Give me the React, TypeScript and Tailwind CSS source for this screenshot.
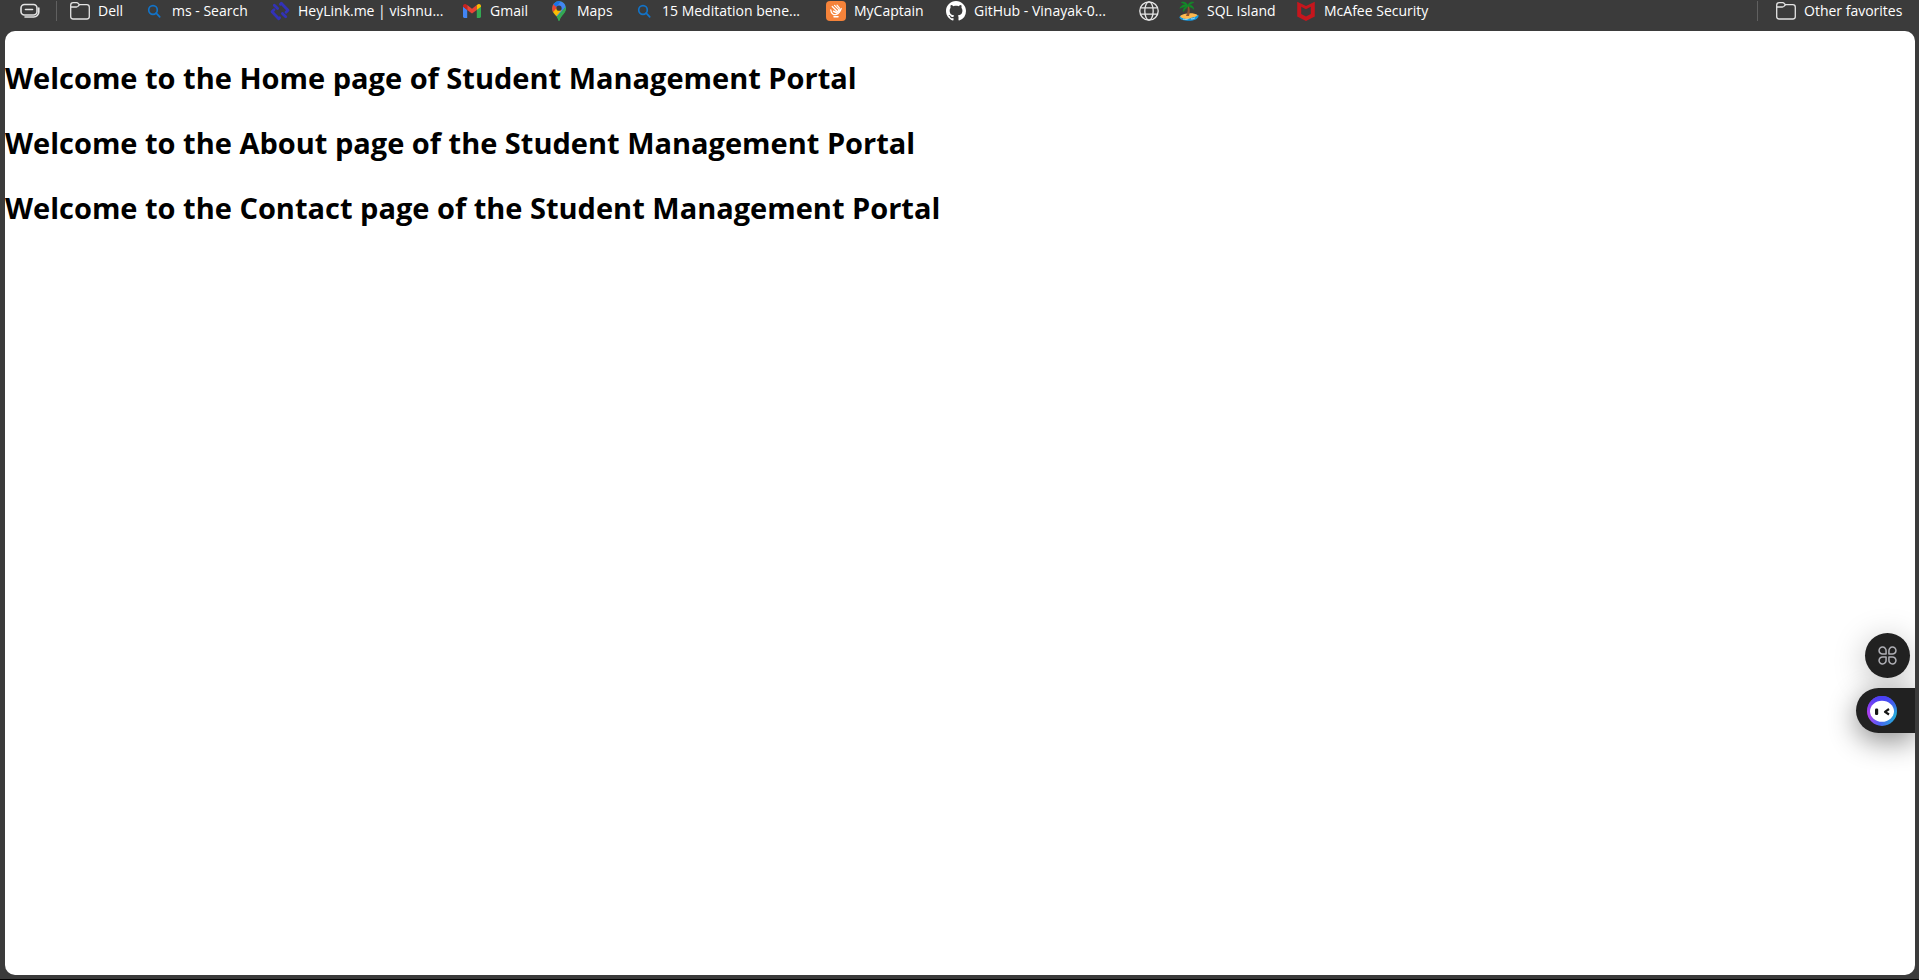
import type { ReactNode } from "react";

function TabActionsIcon() {
  return (
    <svg width="20" height="20" viewBox="0 0 20 20" fill="none" stroke="#e4e4e4" strokeWidth="1.6" strokeLinecap="round" strokeLinejoin="round">
      <rect x="1" y="3.5" width="16" height="10.5" rx="3.5" />
      <path d="M5.5 8.5h7" />
      <path d="M18.8 7v4a5 5 0 0 1-5 5H5" />
    </svg>
  );
}

function FolderIcon() {
  return (
    <svg width="20" height="20" viewBox="0 0 20 20" fill="none" stroke="#e4e4e4" strokeWidth="1.3" strokeLinejoin="round">
      <path d="M.7 4.2A2.5 2.5 0 0 1 3.2 1.7h3.4c.7 0 1.2.2 1.6.7l1.2 1.3h7.4a2.5 2.5 0 0 1 2.5 2.5v9.3a2.5 2.5 0 0 1-2.5 2.5H3.2a2.5 2.5 0 0 1-2.5-2.5z" />
      <path d="M.7 6h5.7c.6 0 1.1-.2 1.5-.6l1.5-1.6" />
    </svg>
  );
}

function SearchIcon() {
  return (
    <svg width="20" height="20" viewBox="0 0 20 20" fill="none" stroke="#1273c8" strokeWidth="1.7" strokeLinecap="round">
      <circle cx="9" cy="9" r="4.3" />
      <path d="M12.2 12.2l3.5 3.6" />
    </svg>
  );
}

function HeyLinkIcon() {
  return (
    <svg width="20" height="20" viewBox="0 0 20 20" fill="none" stroke="#3232b8" strokeWidth="2.8" strokeLinecap="round" strokeLinejoin="round">
      <path d="M4.300 4.300L7.600 7.600" />
      <path d="M4 8.700L2 10.800l6.700 6.900.9-1" />
      <path d="M15.700 15.700l-3.300-3.300" />
      <path d="M16 11.300l2-2.100-6.700-6.900-.9 1" />
    </svg>
  );
}

function GmailIcon() {
  return (
    <svg width="20" height="20" viewBox="0 0 20 20">
      <path fill="#4285f4" d="M1 5.500l4.200 3.200v8.200H2.300A1.300 1.300 0 0 1 1 15.600z" />
      <path fill="#34a853" d="M14.800 8.700L19 5.500v10.100a1.300 1.300 0 0 1-1.300 1.300h-2.900z" />
      <path fill="#ea4335" d="M5.200 4.100L10 7.700l4.800-3.600v4.800L10 12.500 5.200 8.900z" />
      <path fill="#c5221f" d="M1 5.300c0-2.100 2.200-2.900 3.700-1.600l.5.4v4.800L1 5.800z" />
      <path fill="#fbbc04" d="M19 5.300c0-2.100-2.200-2.900-3.700-1.600l-.5.4v4.800L19 5.800z" />
    </svg>
  );
}

function MapsIcon() {
  return (
    <svg width="20" height="20" viewBox="0 0 20 20">
      <defs>
        <clipPath id="map-pin">
          <path d="M10 .3a6.900 6.900 0 0 0-6.900 6.900c0 2.500 1 4 2.800 6.200C7.800 15.700 9 17 9.300 19.300c.2.900 1.200.9 1.400 0 .3-2.300 1.500-3.600 3.400-5.900 1.800-2.200 2.800-3.700 2.800-6.200A6.900 6.900 0 0 0 10 .3z" />
        </clipPath>
      </defs>
      <g clipPath="url(#map-pin)">
        <rect width="20" height="20" fill="#34a853" />
        <path fill="#4285f4" d="M7 0h12v5L9 17 5 8z" />
        <path fill="#34a853" d="M18 4L4.500 19.500H20z" />
        <path fill="#fbbc04" d="M1 13L8 4.500l4.500 4.800L5 18z" />
        <path fill="#ea4335" d="M0 9V2h5l4 3.500L4.200 11z" />
        <path fill="#1a73e8" d="M3.800 3L7 0h5l-4.500 6z" />
      </g>
      <circle cx="10" cy="7.200" r="2.600" fill="#3b3b3b" />
    </svg>
  );
}

function MyCaptainIcon() {
  return (
    <svg width="20" height="20" viewBox="0 0 20 20" fill="none">
      <rect width="20" height="20" rx="4" fill="#f5833a" />
      <g stroke="#fff" strokeLinecap="round" strokeLinejoin="round">
        <path strokeWidth="1.200" d="M8.500 4.300l4.500 4.500M6.200 5.500l5 5M11 4.200l2.500 3" />
        <path strokeWidth="1.300" d="M4.800 9c.3 3.800 3 5.400 5.600 4.400 2.300-.8 3.700-2.500 4.800-5.900" />
        <path strokeWidth="1.500" d="M7.500 10.300l3.100 1.500 2.700-2.700M8 15.700h4" />
      </g>
    </svg>
  );
}

function GitHubIcon() {
  return (
    <svg width="20" height="20" viewBox="0 0 16 16" fill="#fff">
      <path d="M8 0C3.580 0 0 3.580 0 8c0 3.540 2.290 6.530 5.470 7.590.4.070.55-.17.55-.38 0-.19-.01-.82-.01-1.490-2.010.37-2.530-.49-2.690-.94-.09-.23-.48-.94-.82-1.130-.28-.15-.68-.52-.01-.53.63-.01 1.080.58 1.230.82.720 1.210 1.870.87 2.330.66.070-.52.280-.87.510-1.070-1.780-.2-3.640-.89-3.640-3.950 0-.87.310-1.590.82-2.150-.08-.2-.36-1.020.08-2.120 0 0 .67-.21 2.200.82.640-.18 1.320-.27 2-.27s1.360.09 2 .27c1.530-1.040 2.200-.82 2.200-.82.440 1.100.160 1.920.080 2.120.510.560.820 1.270.820 2.150 0 3.070-1.870 3.750-3.650 3.950.290.250.540.730.540 1.480 0 1.070-.01 1.930-.01 2.200 0 .21.150.46.550.38A8.010 8.010 0 0 0 16 8c0-4.420-3.580-8-8-8z" />
    </svg>
  );
}

function GlobeIcon() {
  return (
    <svg width="20" height="20" viewBox="0 0 20 20" fill="none" stroke="#e8e8e8" strokeWidth="1.300">
      <circle cx="10" cy="10" r="9.200" />
      <ellipse cx="10" cy="10" rx="4.200" ry="9.200" />
      <path d="M1.600 6.800h16.800M1.600 13.200h16.800" />
    </svg>
  );
}

function IslandIcon() {
  return (
    <svg width="20" height="20" viewBox="0 0 20 20" fill="none">
      <path d="M.3 16c2.500-2.500 15-3.500 19.400-1.500-.3 3.500-4.700 5.300-9.700 5.300S.8 18.800.3 16z" fill="#1598e0" />
      <path d="M1 15.200c3-3.400 14-4.200 17.500-1.200-1.500 2.300-5 1.800-7 3.200-3 1.300-8.500.8-10.500-2z" fill="#fdb74e" />
      <path d="M4 18c2 .8 4 .4 5.500-.2M12 17.800c1.500.3 3-.3 4-1" stroke="#a5e3fa" strokeWidth=".9" />
      <path d="M8.300 4.500c.9 3 .7 6.500-1.300 10.500h3c1.300-4 1-7.500-.4-10.800z" fill="#8d5130" />
      <path d="M8.800 5C6.500 3 3 3.300.8 7.300 3.500 5.800 6.500 6 8.800 5zM8.800 4.700C8 1.800 5 .2 2.300 1.500 4.600 2 6.500 4 8.800 4.700zM8.800 4.700C9.500 2 12 .3 14.800 1.300 12.500 2 11 4 8.800 4.700zM8.800 5c2.500-1.500 5.500-.5 6 3.300C13.500 6.500 11 6 8.800 5zM8.800 5C6 5.500 3.800 7.500 4.500 10.500 5.500 8 8 7.500 8.800 5z" fill="#128a28" stroke="#128a28" strokeWidth=".6" />
    </svg>
  );
}

function McAfeeIcon() {
  return (
    <svg width="20" height="20" viewBox="0 0 20 20">
      <path fill="#c5161d" d="M1.200.8l8.800 4.300L18.800.8v14.700L10 20l-8.800-4.500zM5.200 5.800v7.200L10 15.400l4.800-2.400V5.800L10 8.200z" />
    </svg>
  );
}

function CloverIcon() {
  return (
    <svg width="19" height="19" viewBox="0 0 20 20" fill="none" stroke="#aeaeb4" strokeWidth="1.600" strokeLinejoin="round">
      <path d="M8.500 8.500H5A3.700 3.700 0 1 1 8.500 5z" />
      <path d="M11.500 8.500H15A3.700 3.700 0 1 0 11.500 5z" />
      <path d="M8.500 11.500H5A3.700 3.700 0 1 0 8.500 15z" />
      <path d="M11.500 11.500H15A3.700 3.700 0 1 1 11.500 15z" />
    </svg>
  );
}

function AssistantIcon() {
  return (
    <svg width="30" height="30" viewBox="0 0 30 30">
      <defs>
        <linearGradient id="ring" x1="0" y1=".65" x2="1" y2=".8">
          <stop offset="0" stopColor="#b83cf0" />
          <stop offset=".45" stopColor="#4a62f2" />
          <stop offset="1" stopColor="#20b4d8" />
        </linearGradient>
        <linearGradient id="ring-top" x1="0" y1="0" x2="0" y2="1">
          <stop offset="0" stopColor="#4a3df5" />
          <stop offset=".6" stopColor="#4a3df5" stopOpacity="0" />
        </linearGradient>
      </defs>
      <circle cx="15" cy="15" r="15" fill="url(#ring)" />
      <circle cx="15" cy="15" r="15" fill="url(#ring-top)" />
      <ellipse cx="15" cy="15.300" rx="12" ry="10.500" fill="#fff" />
      <rect x="8" y="12.500" width="3.200" height="6.500" rx="1.200" fill="#161616" />
      <path d="M22 13l-4 2.800 4 2.700" fill="none" stroke="#161616" strokeWidth="2.200" strokeLinejoin="round" />
    </svg>
  );
}

type Bookmark = { label: string; icon: ReactNode; text?: string; width: string };

const bookmarks: Bookmark[] = [
  { label: "Dell", text: "Dell", icon: <FolderIcon />, width: "w-[54px]" },
  { label: "ms - Search", text: "ms - Search", icon: <SearchIcon />, width: "w-[106px]" },
  { label: "HeyLink.me", text: "HeyLink.me | vishnu...", icon: <HeyLinkIcon />, width: "w-[172px]" },
  { label: "Gmail", text: "Gmail", icon: <GmailIcon />, width: "w-[67px]" },
  { label: "Maps", text: "Maps", icon: <MapsIcon />, width: "w-[65px]" },
  { label: "15 Meditation benefits", text: "15 Meditation bene...", icon: <SearchIcon />, width: "w-[172px]" },
  { label: "MyCaptain", text: "MyCaptain", icon: <MyCaptainIcon />, width: "w-[100px]" },
  { label: "GitHub", text: "GitHub - Vinayak-0...", icon: <GitHubIcon />, width: "w-[173px]" },
  { label: "Website", icon: <GlobeIcon />, width: "w-5" },
  { label: "SQL Island", text: "SQL Island", icon: <IslandIcon />, width: "w-[97px]" },
  { label: "McAfee Security", text: "McAfee Security", icon: <McAfeeIcon />, width: "w-[135px]" },
];

function BookmarkLink({ label, icon, text, width }: Bookmark) {
  return (
    <a href="#" aria-label={text ? undefined : label} className={`flex h-5 shrink-0 items-center gap-2 whitespace-nowrap ${width}`}>
      <span className="shrink-0">{icon}</span>
      {text && <span>{text}</span>}
    </a>
  );
}

const headings = [
  "Welcome to the Home page of Student Management Portal",
  "Welcome to the About page of the Student Management Portal",
  "Welcome to the Contact page of the Student Management Portal",
];

export default function App() {
  return (
    <div className="flex min-h-screen flex-col border-b border-black bg-[#3b3b3b] font-['Open_Sans','Noto_Sans',sans-serif]">
      <nav aria-label="Favorites" className="flex h-[31px] items-start overflow-hidden pt-px pr-4 pl-5 text-[14px] leading-5 text-white">
        <button type="button" aria-label="Tab actions" className="shrink-0">
          <TabActionsIcon />
        </button>
        <span className="mr-[13px] ml-4 h-5 w-px shrink-0 bg-[#606060]" />
        <div className="flex min-w-0 flex-1 gap-5 overflow-hidden">
          {bookmarks.map((bookmark) => (
            <BookmarkLink key={bookmark.label} {...bookmark} />
          ))}
        </div>
        <span className="mr-[18px] h-5 w-px shrink-0 bg-[#606060]" />
        <BookmarkLink label="Other favorites" text="Other favorites" icon={<FolderIcon />} width="w-[127px]" />
      </nav>

      <main className="relative mr-1 mb-1 ml-[5px] flex-1 overflow-hidden rounded-[10px] bg-white pt-[27px]">
        <div className="flex flex-col gap-[25px]">
          {headings.map((heading) => (
            <h1 key={heading} className="text-[29px] leading-10 font-bold text-black">
              {heading}
            </h1>
          ))}
        </div>

        <div className="absolute right-0 bottom-[242px] flex flex-col items-end gap-[10px]">
          <button
            type="button"
            aria-label="Open tools"
            className="mr-[5px] flex size-[45px] items-center justify-center rounded-full bg-[#212121] shadow-[0_6px_32px_rgba(0,0,0,0.25)]"
          >
            <CloverIcon />
          </button>
          <button
            type="button"
            aria-label="Open assistant"
            className="flex h-[45px] w-[59px] items-center rounded-l-full bg-[#212121] pl-[11px] shadow-[0_8px_28px_rgba(0,0,0,0.45)]"
          >
            <AssistantIcon />
          </button>
        </div>
      </main>
    </div>
  );
}
